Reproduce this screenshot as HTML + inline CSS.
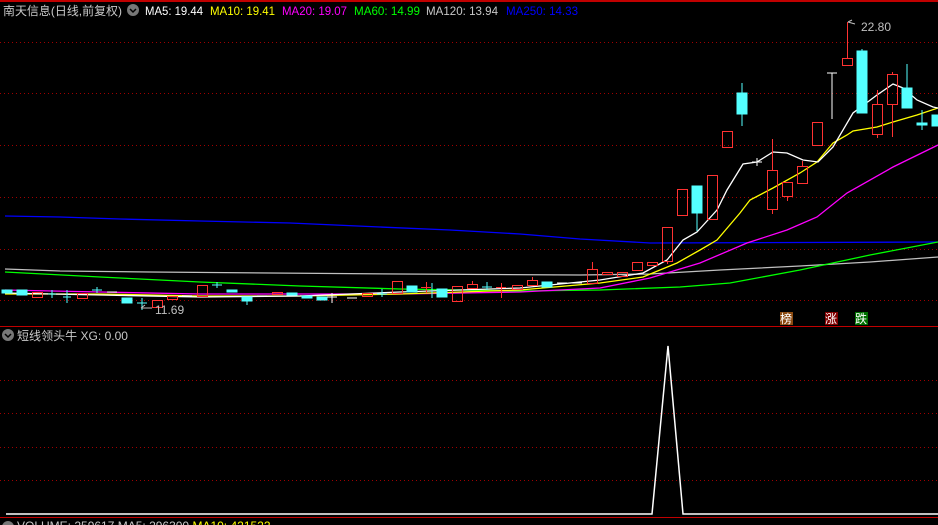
<!DOCTYPE html>
<html><head><meta charset="utf-8"><style>
html,body{margin:0;padding:0;background:#000;width:938px;height:525px;overflow:hidden}
svg{display:block}
text{font-family:"Liberation Sans","Noto Sans CJK SC",sans-serif;font-size:12px}
.r rect,.r path{stroke:#ff3232;fill:none;shape-rendering:crispEdges}
</style></head><body>
<svg width="938" height="525" viewBox="0 0 938 525" xmlns="http://www.w3.org/2000/svg">
<rect width="938" height="525" fill="#000"/>
<line x1="0" y1="1" x2="938" y2="1" stroke="#c00000" stroke-width="2"/>
<line x1="0" y1="326.5" x2="938" y2="326.5" stroke="#c00000"/>
<line x1="0" y1="517.5" x2="938" y2="517.5" stroke="#c00000"/>
<g stroke="#a00000" stroke-dasharray="1,3">
<line x1="0" y1="42.5" x2="938" y2="42.5"/><line x1="0" y1="93.5" x2="938" y2="93.5"/>
<line x1="0" y1="145.5" x2="938" y2="145.5"/><line x1="0" y1="197.5" x2="938" y2="197.5"/>
<line x1="0" y1="249.5" x2="938" y2="249.5"/><line x1="0" y1="300.5" x2="938" y2="300.5"/>
<line x1="0" y1="380.5" x2="938" y2="380.5"/><line x1="0" y1="413.5" x2="938" y2="413.5"/>
<line x1="0" y1="447.5" x2="938" y2="447.5"/><line x1="0" y1="480.5" x2="938" y2="480.5"/>
</g>
<g fill="none" stroke-width="1.3">
<polyline stroke="#0000ff" points="5,216 60,217 120,219 200,221 290,223 380,227 450,230 520,234 580,239 650,243 938,242"/>
<polyline stroke="#c0c0c0" points="5,269 60,271 150,272 270,273 400,274 580,275 650,274 720,270 800,266 870,262 938,257"/>
<polyline stroke="#00ff00" points="5,272 100,277 200,282 300,286 400,289 520,291 600,290 680,287 730,283 800,270 870,255 938,242"/>
<polyline stroke="#ff00ff" points="5,290 100,292 200,294 300,294 400,294 520,292 600,288 650,278 700,263 747,243 787,230 817,217 847,193 893,167 938,145"/>
<polyline stroke="#ffff00" points="5,294 100,294 200,296 300,296 400,294 520,290 600,283 643,277 677,263 700,250 717,240 740,213 750,200 773,188 800,173 817,162 833,143 847,135 853,131 877,127 893,122 917,115 938,108"/>
<polyline stroke="#ffffff" points="5,293 100,295 200,297 300,296 400,292 520,288 600,280 643,273 667,260 683,240 697,232 717,210 727,190 743,164 757,162 773,152 787,153 803,160 818,162 833,147 853,113 877,95 893,84 903,88 917,100 933,107 938,108"/>
</g>
<g class="r">
<rect x="32.5" y="292.5" width="10" height="5"/><rect x="77.5" y="293.5" width="10" height="5"/>
<rect x="152.5" y="300.5" width="10" height="7"/><rect x="167.5" y="296.5" width="10" height="3"/>
<rect x="197.5" y="285.5" width="10" height="11"/><rect x="272.5" y="292.5" width="10" height="2"/>
<rect x="362.5" y="293.5" width="10" height="3"/><rect x="392.5" y="281.5" width="10" height="12"/>
<rect x="452.5" y="286.5" width="10" height="15"/><rect x="467.5" y="284.5" width="10" height="4"/>
<rect x="512.5" y="285.5" width="10" height="4"/><rect x="527.5" y="280.5" width="10" height="5"/>
<rect x="587.5" y="269.5" width="10" height="14"/>
<rect x="602.5" y="272.5" width="10" height="2"/><rect x="617.5" y="272.5" width="10" height="4"/>
<rect x="632.5" y="262.5" width="10" height="8"/><rect x="647.5" y="262.5" width="10" height="3"/>
<rect x="662.5" y="227.5" width="10" height="34"/><rect x="677.5" y="189.5" width="10" height="26"/>
<rect x="707.5" y="175.5" width="10" height="44"/><rect x="722.5" y="131.5" width="10" height="16"/>
<rect x="767.5" y="170.5" width="10" height="39"/><rect x="782.5" y="182.5" width="10" height="14"/>
<rect x="797.5" y="166.5" width="10" height="17"/><rect x="812.5" y="122.5" width="10" height="23"/>
<rect x="842.5" y="58.5" width="10" height="7"/><rect x="872.5" y="104.5" width="10" height="30"/>
<rect x="887.5" y="74.5" width="10" height="30"/>
<path d="M592.5 262V269M426.5 282V293M421 287.5H431M501.5 283V298M496 287.5H506M472.5 281V284M532.5 277V280M772.5 139V170M772.5 209V214M787.5 196V201M802.5 161V166M847.5 22V58M877.5 90V104M877.5 134V138M892.5 104V137M892.5 72V74M667.5 261V264"/>
</g>
<g fill="#54ffff" stroke="#54ffff">
<rect x="2" y="290" width="10" height="3"/><rect x="17" y="290" width="10" height="5"/>
<rect x="122" y="298" width="10" height="5"/><rect x="227" y="290" width="10" height="2"/>
<rect x="242" y="297" width="10" height="4"/><rect x="287" y="293" width="10" height="2"/>
<rect x="302" y="296" width="10" height="2"/><rect x="317" y="297" width="10" height="3"/>
<rect x="407" y="286" width="10" height="6"/><rect x="437" y="289" width="10" height="8"/>
<rect x="542" y="282" width="10" height="5"/>
<rect x="692" y="186" width="10" height="27"/><rect x="737" y="93" width="10" height="21"/>
<rect x="857" y="51" width="10" height="62"/><rect x="902" y="88" width="10" height="20"/>
<rect x="917" y="123" width="10" height="2"/><rect x="932" y="115" width="6" height="11"/>
<path fill="none" d="M697 213V231M742 83V126M922 110V130M907 64V88M862 49V51M48 294H56M52 290V298M63 297H71M67 290V303M92 290H102M97 287V293M137 303H147M142 298V310M212 285H222M217 282V288M377 294H387M382 289V297M432 283V298M482 287H492M487 282V290M247 301V305"/>
</g>
<g stroke="#fff" fill="none">
<path d="M752 162H762M757 158V166M832 73V119M827 73H837M337 297H327M332 293V303M347 298H357M557 283H567M572 283H582M107 292H117M182 296H192M257 296H267"/>
</g>
<path d="M848 22L852 20M848 22L855 24" stroke="#c0c0c0" fill="none"/>
<text x="861" y="31" fill="#c0c0c0">22.80</text>
<path d="M141 308H152M141 308L145 305" stroke="#c0c0c0" fill="none"/>
<text x="155" y="314" fill="#c0c0c0">11.69</text>
<rect x="780" y="312" width="13" height="13" fill="#8b4a10"/><text x="780" y="323" fill="#fff">榜</text>
<rect x="825" y="312" width="13" height="13" fill="#800000"/><text x="825" y="323" fill="#fff">涨</text>
<rect x="855" y="312" width="13" height="13" fill="#007000"/><text x="855" y="323" fill="#fff">跌</text>
<text x="3" y="15" fill="#c8c8c8" textLength="119" lengthAdjust="spacingAndGlyphs">南天信息(日线,前复权)</text>
<circle cx="133" cy="10" r="6" fill="#777"/><path d="M130 9L133 12L136 9" stroke="#000" fill="none" stroke-width="1.5"/>
<text x="145" y="15" fill="#fff" textLength="58" lengthAdjust="spacingAndGlyphs">MA5: 19.44</text>
<text x="210" y="15" fill="#ffff00" textLength="65" lengthAdjust="spacingAndGlyphs">MA10: 19.41</text>
<text x="282" y="15" fill="#ff00ff" textLength="65" lengthAdjust="spacingAndGlyphs">MA20: 19.07</text>
<text x="354" y="15" fill="#00ff00" textLength="66" lengthAdjust="spacingAndGlyphs">MA60: 14.99</text>
<text x="426" y="15" fill="#c8c8c8" textLength="72" lengthAdjust="spacingAndGlyphs">MA120: 13.94</text>
<text x="506" y="15" fill="#0000ff" textLength="72" lengthAdjust="spacingAndGlyphs">MA250: 14.33</text>
<circle cx="8" cy="335" r="6" fill="#777"/><path d="M5 334L8 337L11 334" stroke="#000" fill="none" stroke-width="1.5"/>
<text x="17" y="340" fill="#c8c8c8" textLength="111" lengthAdjust="spacingAndGlyphs">短线领头牛 XG: 0.00</text>
<polyline fill="none" stroke="#fff" stroke-width="1.5" points="6,514 652,514 668,346 683,514 938,514"/>
<circle cx="8" cy="527" r="6" fill="#777"/>
<text x="17" y="530" fill="#c8c8c8">VOLUME: 259617 MA5: 296300 <tspan fill="#ffff00">MA10: 421522</tspan></text>
</svg>
</body></html>
